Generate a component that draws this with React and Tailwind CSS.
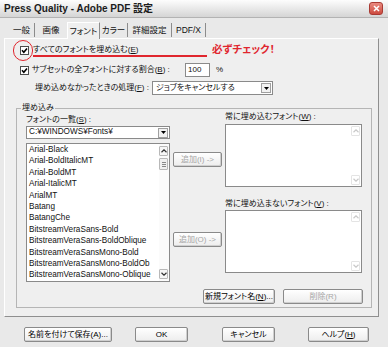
import React from "react";

const ui = "font-['Liberation_Sans','Noto_Sans_CJK_JP',sans-serif] [font-feature-settings:'palt']";

const fonts = [
  "Arial-Black",
  "Arial-BoldItalicMT",
  "Arial-BoldMT",
  "Arial-ItalicMT",
  "ArialMT",
  "Batang",
  "BatangChe",
  "BitstreamVeraSans-Bold",
  "BitstreamVeraSans-BoldOblique",
  "BitstreamVeraSansMono-Bold",
  "BitstreamVeraSansMono-BoldOb",
  "BitstreamVeraSansMono-Oblique",
];

const tabs = [
  { label: "一般", w: "w-[26px]", cls: "border-r border-[#8c8c8c]" },
  { label: "画像", w: "w-[32px]", cls: "" },
  { label: "フォント", w: "w-[33px]", sel: true },
  { label: "カラー", w: "w-[28px]", cls: "border-r border-[#8c8c8c]" },
  { label: "詳細設定", w: "w-[44px]", cls: "border-r border-[#8c8c8c]" },
  { label: "PDF/X", w: "w-[34px]", cls: "border-r border-[#8c8c8c]" },
];

const Check = () => (
  <span className="w-[9px] h-[9px] shrink-0 border border-[#4d4d4d] bg-white flex items-center justify-center">
    <svg width="7" height="7" viewBox="0 0 7 7">
      <path d="M1 3.3 L2.8 5.2 L6 1.4" stroke="#000" strokeWidth="1.6" fill="none" />
    </svg>
  </span>
);

const DropArrow = () => (
  <span className="w-[10px] h-[10px] border border-[#a0a0a0] bg-[#f2f2f2] flex items-center justify-center">
    <svg width="5" height="3" viewBox="0 0 5 3">
      <path d="M0 0h5L2.5 3z" fill="#000" />
    </svg>
  </span>
);

const ScrollBtn = ({ down, dim }) => (
  <span className={`w-[9px] h-[10px] flex items-center justify-center rounded-[1px] border ${dim ? "border-[#e4e4e4] bg-white" : "border-[#b8b8b8] bg-[#f6f6f6]"}`}>
    <svg width="6" height="4" viewBox="0 0 6 4">
      <path d={down ? "M0.5 0.8 L3 3.2 L5.5 0.8" : "M0.5 3.2 L3 0.8 L5.5 3.2"} stroke={dim ? "#c9c9c9" : "#333"} strokeWidth="1.2" fill="none" />
    </svg>
  </span>
);

const Btn = ({ children, className = "", disabled }) => (
  <div
    className={`h-[15px] flex items-center justify-center border border-[#8a8a8a] rounded-[2px] bg-linear-to-b from-white to-[#ededed] shadow-[inset_-1px_-1px_0_#cfcfcf] whitespace-nowrap ${disabled ? "text-[#a6a6a6]" : "text-black"} ${className}`}
  >
    {children}
  </div>
);

const EmptyList = () => (
  <div className="h-[63px] border border-[#8a8a8a] bg-white flex justify-end pr-[1px] py-[1px]">
    <div className="flex flex-col justify-between">
      <ScrollBtn dim />
      <ScrollBtn down dim />
    </div>
  </div>
);

export default function App() {
  return (
    <div className={`w-[388px] h-[347px] bg-[#e9e9e9] relative overflow-hidden text-[8px] text-[#111] ${ui}`}>
      {/* title bar */}
      <div className="h-[18px] flex items-center justify-between pl-[4px] pr-[5px] bg-linear-to-b from-[#fdfdfd] to-[#d5d5d5] border-b border-[#b3b3b3]">
        <span className="font-bold text-[10px] text-[#1c1c1c]">Press Quality - Adobe PDF 設定</span>
        <span className="w-[14px] h-[13px] rounded-[3px] border border-[#a93a33] bg-linear-to-b from-[#e98a80] to-[#cc4a3f] flex items-center justify-center">
          <svg width="7" height="7" viewBox="0 0 7 7">
            <path d="M1 1L6 6M6 1L1 6" stroke="#fff" strokeWidth="1.5" />
          </svg>
        </span>
      </div>

      {/* tabs */}
      <div className="h-[20px] pl-[9px] flex items-end text-[8.5px]">
        {tabs.map((t) =>
          t.sel ? (
            <div
              key={t.label}
              className={`${t.w} h-[17px] -mb-px relative z-10 flex items-center justify-center border-t border-l border-white border-r border-r-[#8c8c8c] bg-[#efefef]`}
            >
              {t.label}
            </div>
          ) : (
            <div key={t.label} className={`${t.w} h-[14px] mb-[1px] flex items-center justify-center ${t.cls}`}>
              {t.label}
            </div>
          )
        )}
      </div>

      {/* tab panel */}
      <div className="ml-[4px] w-[375px] h-[279px] border border-t-white border-l-white border-r-[#8f8f8f] border-b-[#8f8f8f] bg-[#efefef]">
        <div className="mt-[5px] pl-[15px] h-[12px] flex items-center gap-[4px]">
          <Check />
          <span className="whitespace-nowrap">
            すべてのフォントを埋め込む(<span className="underline">E</span>)
          </span>
        </div>

        <div className="mt-[7px] pl-[15px] h-[14px] flex items-center">
          <Check />
          <span className="ml-[3px] w-[153px] whitespace-nowrap">
            サブセットの全フォントに対する割合(<span className="underline">B</span>) :
          </span>
          <div className="w-[25px] h-[14px] border border-[#8a8a8a] bg-white pl-[2px] flex items-center">100</div>
          <span className="ml-[6px]">%</span>
        </div>

        <div className="mt-[4px] pl-[30px] h-[14px] flex items-center">
          <span className="w-[117px] whitespace-nowrap">
            埋め込めなかったときの処理(<span className="underline">F</span>) :
          </span>
          <div className="w-[121px] h-[14px] border border-[#8a8a8a] bg-white flex items-center justify-between pl-[3px] pr-[1px]">
            <span>ジョブをキャンセルする</span>
            <DropArrow />
          </div>
        </div>

        {/* group box */}
        <div className="mt-[13px] ml-[11px] w-[356px] h-[200px] border border-[#b5b5b5] relative">
          <span className="absolute left-[4px] -top-[7px] px-[1px] bg-[#efefef] leading-[12px]">埋め込み</span>

          <div className="flex">
            <div className="ml-[9px] w-[144px]">
              <div className="mt-[6px] h-[10px] leading-[10px] whitespace-nowrap">
                フォントの一覧(<span className="underline">S</span>) :
              </div>
              <div className="mt-[1px] h-[13px] border border-[#8a8a8a] bg-white flex items-center justify-between pl-[2px] pr-[1px] text-[8.2px]">
                <span>C:¥WINDOWS¥Fonts¥</span>
                <DropArrow />
              </div>
              <div className="mt-[4px] h-[139px] border border-[#8a8a8a] bg-white flex">
                <div className="flex-1 pl-[2px] text-[8.2px] leading-[11.4px] overflow-hidden whitespace-nowrap">
                  {fonts.map((f) => (
                    <div key={f}>{f}</div>
                  ))}
                </div>
                <div className="w-[10px] flex flex-col py-[2px] pr-[1px] bg-[#fbfbfb]">
                  <ScrollBtn />
                  <span className="mt-[2px] w-[9px] h-[12px] rounded-[1px] border border-[#b8b8b8] bg-[#f1f1f1] flex flex-col items-center justify-center gap-[1px]">
                    <span className="w-[4px] h-px bg-[#8a8a8a]" />
                    <span className="w-[4px] h-px bg-[#8a8a8a]" />
                    <span className="w-[4px] h-px bg-[#8a8a8a]" />
                  </span>
                  <span className="flex-1" />
                  <ScrollBtn down />
                </div>
              </div>
            </div>

            <div className="ml-[3px] w-[49px]">
              <Btn disabled className="mt-[43px]">追加(I) -&gt;</Btn>
              <Btn disabled className="mt-[65px]">追加(O) -&gt;</Btn>
            </div>

            <div className="ml-[3px] w-[137px]">
              <div className="mt-[3px] h-[10px] leading-[10px] whitespace-nowrap">
                常に埋め込むフォント(<span className="underline">W</span>) :
              </div>
              <div className="mt-[2px]">
                <EmptyList />
              </div>
              <div className="mt-[12px] h-[10px] leading-[10px] whitespace-nowrap">
                常に埋め込まないフォント(<span className="underline">V</span>) :
              </div>
              <div className="mt-[1px]">
                <EmptyList />
              </div>
            </div>
          </div>

          <div className="mt-[7px] flex justify-end gap-[8px] pr-[8px]">
            <Btn className="w-[72px]">
              新規フォント名(<span className="underline">N</span>)...
            </Btn>
            <Btn disabled className="w-[80px]">削除(R)</Btn>
          </div>
        </div>
      </div>

      {/* bottom buttons */}
      <div className="mt-[10px] pl-[24px] flex">
        <Btn className="w-[88px]">名前を付けて保存(A)...</Btn>
        <Btn className="ml-[23px] w-[53px]">OK</Btn>
        <Btn className="ml-[34px] w-[53px]">キャンセル</Btn>
        <Btn className="ml-[33px] w-[61px]">
          ヘルプ(<span className="underline">H</span>)
        </Btn>
      </div>

      {/* red annotation */}
      <span className="absolute left-[13px] top-[40px] w-[20px] h-[21px] rounded-full border-[1.5px] border-[#e0262e]" />
      <span className="absolute left-[33px] top-[55px] w-[174px] h-[1.5px] bg-[#e0262e]" />
      <span className="absolute left-[212px] top-[43px] text-[10.5px] leading-[12px] font-bold text-[#e0262e] whitespace-nowrap">
        必ずチェック！
      </span>
    </div>
  );
}
